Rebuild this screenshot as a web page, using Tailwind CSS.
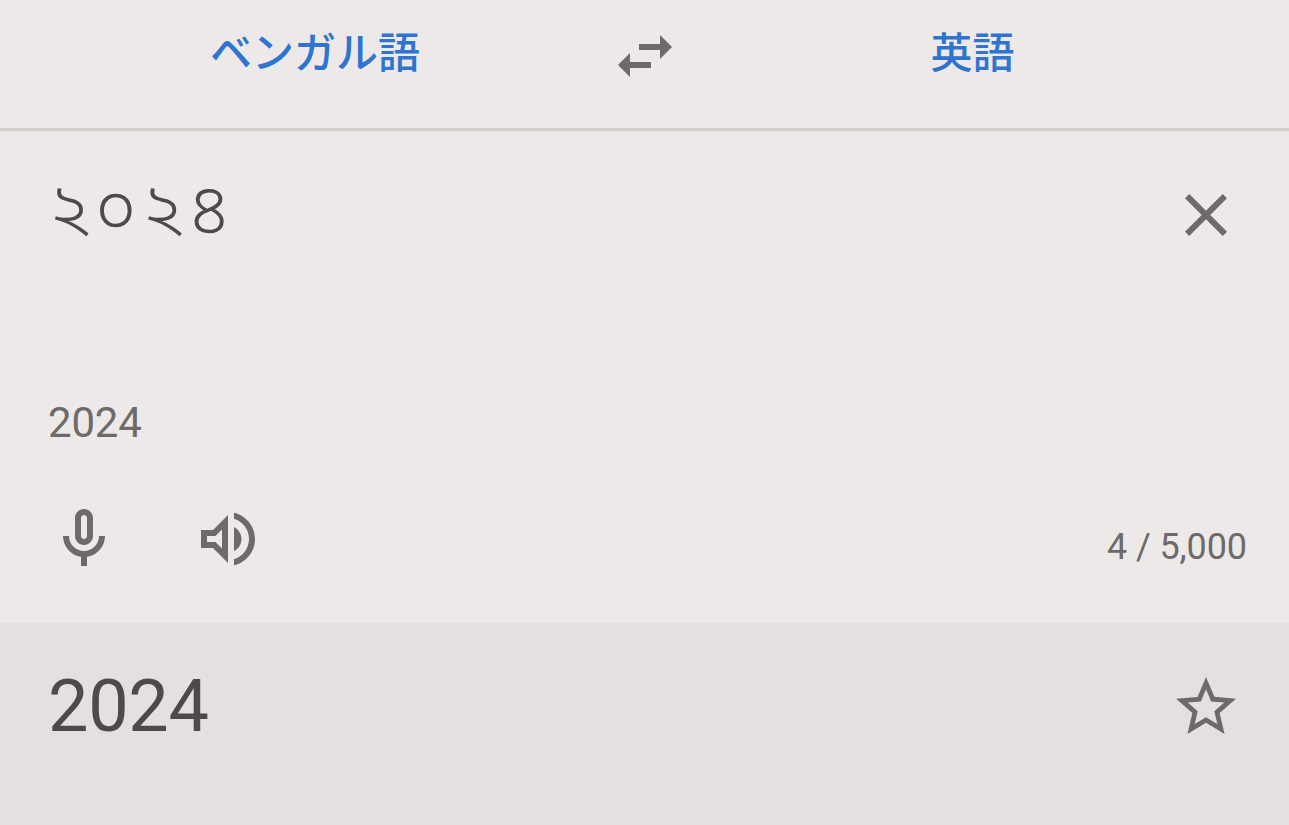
<!DOCTYPE html>
<html lang="ja">
<head>
  <meta charset="UTF-8">
  <title>翻訳</title>
  <script src="https://cdn.jsdelivr.net/npm/@tailwindcss/browser@4"></script>
</head>
<body class="bg-[#ede9e8] h-screen flex flex-col overflow-hidden font-['Roboto','Noto_Sans_CJK_JP',sans-serif] text-[#6e6a69]">
  <!-- language bar -->
  <header class="h-[131px] shrink-0 border-b-3 border-[#d4cfca] flex items-start text-[42px] leading-[60px] font-medium text-[#2f74d0]">
    <button class="w-[609px] pl-[21px] pt-6 text-center">ベンガル語</button>
    <button class="pt-5 text-[#6e6a69]">
      <svg class="size-18" viewBox="0 0 24 24" fill="currentColor"><path d="M6.99 11 3 15l3.99 4v-3H14v-2H6.99v-3zM21 9l-3.99-4v3H10v2h7.01v3L21 9z"/></svg>
    </button>
    <button class="flex-1 pr-[25px] pt-6 text-center">英語</button>
  </header>

  <!-- source text -->
  <main class="h-[492px] shrink-0 flex flex-col pl-12 pr-[42px]">
    <div class="h-[259px] flex justify-between pt-12">
      <p lang="bn" class="font-['Noto_Sans_Bengali','Noto_Sans',sans-serif] font-light text-[72px] leading-[72px] tracking-[4px] text-[#4e4a4b]">২০২৪</p>
      <button class="size-18 mr-[5px]">
        <svg class="size-18" viewBox="0 0 24 24" fill="currentColor"><path d="M19 6.41 17.59 5 12 10.59 6.41 5 5 6.41 10.59 12 5 17.59 6.41 19 12 13.41 17.59 19 19 17.59 13.41 12z"/></svg>
      </button>
    </div>
    <p class="h-[113px] pt-2 text-[42px] leading-[50px] tracking-[-0.2px]">2024</p>
    <div class="flex items-start">
      <button>
        <svg class="size-18" viewBox="0 0 24 24" fill="currentColor"><path d="M12 14c1.66 0 3-1.34 3-3V5c0-1.66-1.34-3-3-3S9 3.34 9 5v6c0 1.66 1.34 3 3 3zM11 5c0-.55.45-1 1-1s1 .45 1 1v6c0 .55-.45 1-1 1s-1-.45-1-1V5zM17 11c0 2.76-2.24 5-5 5s-5-2.24-5-5H5c0 3.53 2.61 6.43 6 6.92V21h2v-3.08c3.39-.49 6-3.39 6-6.92h-2z" fill-rule="evenodd"/></svg>
      </button>
      <button class="ml-18">
        <svg class="size-18" viewBox="0 0 24 24" fill="currentColor"><path d="M3 9v6h4l5 5V4L7 9H3zm7-.17v6.34L7.83 13H5v-2h2.83L10 8.83zM16.5 12c0-1.77-1.02-3.29-2.5-4.03v8.05c1.48-.73 2.5-2.25 2.5-4.02zM14 3.23v2.06c2.89.86 5 3.54 5 6.71s-2.11 5.85-5 6.71v2.06c4.01-.91 7-4.49 7-8.77s-2.99-7.86-7-8.77z" fill-rule="evenodd"/></svg>
      </button>
      <span class="ml-auto pt-[23px] text-[36px] leading-[42px] tracking-[-0.1px]">4 / 5,000</span>
    </div>
  </main>

  <!-- translation -->
  <section class="flex-1 bg-[#e4e0df] flex justify-between pl-12 pr-[47px] pt-12">
    <p class="text-[72px] leading-[72px] tracking-[-0.3px] text-[#4e4a4b]">2024</p>
    <button class="size-18">
      <svg class="size-18" viewBox="0 0 24 24" fill="currentColor"><path d="m22 9.24-7.19-.62L12 2 9.19 8.63 2 9.24l5.46 4.73L5.82 21 12 17.27 18.18 21l-1.63-7.03L22 9.24zM12 15.4l-3.76 2.27 1-4.28-3.32-2.88 4.38-.38L12 6.1l1.71 4.04 4.38.38-3.32 2.88 1 4.28L12 15.4z"/></svg>
    </button>
  </section>
</body>
</html>
